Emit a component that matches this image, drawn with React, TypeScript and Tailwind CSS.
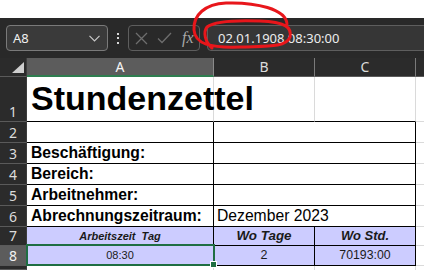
import React from "react";

const ui = "font-['Noto_Sans','Open_Sans',sans-serif]";
const arial = "font-['Liberation_Sans',Arial,sans-serif]";

function RowHead({ n, sel = false }: { n: string; sel?: boolean }) {
  return (
    <div
      className={`${ui} flex items-end justify-center border-b border-r border-b-[#5a5a5a] border-r-[#3c3c3c] text-[14px] leading-[19px] ${
        sel ? "bg-[#5c5c5c] text-[#f2f2f2]" : "bg-[#2b2b2b] text-[#dcdcdc]"
      }`}
    >
      {n}
    </div>
  );
}

export default function App() {
  return (
    <div className="relative w-[424px] h-[270px] overflow-hidden bg-white">
      <div className="h-[18px] bg-white" />
      {/* Formula bar */}
      <div className={`${ui} h-[40px] bg-[#292929] flex items-start pt-[7px] pl-[6px]`}>
        <div className="w-[102px] h-[26px] shrink-0 rounded-[4px] border border-[#7a7a7a] bg-[#3a3a3a] flex items-center justify-between pl-[6px] pr-[6px]">
          <span className="text-[13px] text-[#f0f0f0] leading-none">A8</span>
          <svg width="11" height="7" viewBox="0 0 11 7" className="mr-[1px]">
            <path d="M0.5 0.8 L5.5 5.8 L10.5 0.8" fill="none" stroke="#c8c8c8" strokeWidth="1.2" />
          </svg>
        </div>
        <div className="w-[20px] h-[26px] shrink-0 flex flex-col items-center justify-center gap-[2.5px]">
          <div className="w-[2px] h-[2px] bg-[#d8d8d8]" />
          <div className="w-[2px] h-[2px] bg-[#d8d8d8]" />
          <div className="w-[2px] h-[2px] bg-[#d8d8d8]" />
        </div>
        <div className="w-[72px] h-[26px] shrink-0 rounded-[4px] border border-[#5e5e5e] flex items-center pl-[6px] gap-[9px]">
          <svg width="13" height="13" viewBox="0 0 13 13">
            <path d="M1 1 L12 12 M12 1 L1 12" stroke="#6e6e6e" strokeWidth="1.3" />
          </svg>
          <svg width="15" height="12" viewBox="0 0 15 12">
            <path d="M1 6.5 L5 10.5 L14 1" fill="none" stroke="#6e6e6e" strokeWidth="1.3" />
          </svg>
          <span className="font-['Liberation_Serif',serif] italic text-[16px] text-[#a8a8a8] leading-none ml-[1px]">
            fx
          </span>
        </div>
        <div className="ml-[7px] w-[240px] h-[26px] shrink-0 rounded-l-[4px] border border-[#5e5e5e] bg-[#363636] flex items-center pl-[10px]">
          <span className="text-[13px] text-[#ededed] leading-none">02.01.1908 08:30:00</span>
        </div>
      </div>

      {/* Grid */}
      <div className="grid grid-cols-[27px_187px_101px_101px_1fr] grid-rows-[19px_45px_21px_21px_21px_21px_21px_19px_20px_1fr] h-[212px]">
        {/* header row */}
        <div className="relative bg-[#2b2b2b] border-r border-b border-r-[#3c3c3c] border-b-[#5a5a5a]">
          <svg width="27" height="19" viewBox="0 0 27 19" className="absolute left-0 top-0">
            <path d="M12 15 L24 15 L24 4 Z" fill="#cfcfcf" />
          </svg>
        </div>
        <div className={`${ui} bg-[#5c5c5c] border-r border-r-[#8a8a8a] border-b-2 border-b-[#2e7d4f] flex items-center justify-center text-[14px] text-[#f4f4f4] leading-none`}>
          A
        </div>
        <div className={`${ui} bg-[#2b2b2b] border-r border-r-[#7a7a7a] border-b border-b-[#5a5a5a] flex items-center justify-center text-[14px] text-[#dcdcdc] leading-none`}>
          B
        </div>
        <div className={`${ui} bg-[#2b2b2b] border-r border-r-[#7a7a7a] border-b border-b-[#5a5a5a] flex items-center justify-center text-[14px] text-[#dcdcdc] leading-none`}>
          C
        </div>
        <div className="bg-[#2b2b2b] border-b border-b-[#5a5a5a]" />

        {/* row 1 */}
        <RowHead n="1" />
        <div className={`${arial} border-r border-b border-r-[#dadada] border-b-black flex items-end pl-[4px] pb-[6px] text-[34px] font-bold leading-none text-black whitespace-nowrap overflow-visible z-10`}>
          Stundenzettel
        </div>
        <div className="border-r border-b border-r-[#dadada] border-b-black" />
        <div className="border-r border-b border-r-[#dadada] border-b-black" />
        <div className="border-b border-b-[#dadada]" />

        {/* row 2 */}
        <RowHead n="2" />
        <div className="border-r border-b border-black" />
        <div className="col-span-2 border-r border-b border-black" />
        <div className="border-b border-b-[#dadada]" />

        {/* rows 3-5 */}
        {["Beschäftigung:", "Bereich:", "Arbeitnehmer:"].map((t, i) => (
          <React.Fragment key={t}>
            <RowHead n={String(i + 3)} />
            <div className={`${arial} border-r border-b border-black pl-[4px] text-[15.7px] font-bold leading-[20px] text-black whitespace-nowrap`}>
              {t}
            </div>
            <div className="col-span-2 border-r border-b border-black" />
            <div className="border-b border-b-[#dadada]" />
          </React.Fragment>
        ))}

        {/* row 6 */}
        <RowHead n="6" />
        <div className={`${arial} border-r border-b border-black pl-[4px] text-[15.7px] font-bold leading-[20px] text-black whitespace-nowrap`}>
          Abrechnungszeitraum:
        </div>
        <div className={`${arial} col-span-2 border-r border-b border-black pl-[3px] text-[15.7px] leading-[20px] text-black whitespace-nowrap`}>
          Dezember 2023
        </div>
        <div className="border-b border-b-[#dadada]" />

        {/* row 7 */}
        <RowHead n="7" />
        <div className={`${arial} bg-[#ccccff] border-r border-b border-black text-center text-[11px] font-bold italic leading-[19px] text-[#1a1a1a] whitespace-pre`}>
          {"Arbeitszeit  Tag"}
        </div>
        <div className={`${arial} bg-[#ccccff] border-r border-b border-black text-center text-[13.4px] font-bold italic leading-[18px] text-[#1a1a1a]`}>
          Wo Tage
        </div>
        <div className={`${arial} bg-[#ccccff] border-r border-b border-black text-center text-[13px] font-bold italic leading-[18px] text-[#1a1a1a]`}>
          Wo Std.
        </div>
        <div className="border-b border-b-[#dadada]" />

        {/* row 8 */}
        <RowHead n="8" sel />
        <div className={`${arial} bg-[#ccccff] border-r border-b border-black text-center text-[11px] leading-[19px] text-[#1a1a1a]`}>
          08:30
        </div>
        <div className={`${arial} bg-[#ccccff] border-r border-b border-black text-center text-[12.5px] leading-[19px] text-[#1a1a1a]`}>
          2
        </div>
        <div className={`${arial} bg-[#ccccff] border-r border-b border-black text-center text-[12.3px] leading-[19px] text-[#1a1a1a]`}>
          70193:00
        </div>
        <div className="border-b border-b-[#dadada]" />

        {/* row 9 */}
        <RowHead n="" />
        <div className="border-r border-r-[#dadada]" />
        <div className="border-r border-r-[#dadada]" />
        <div className="border-r border-r-[#dadada]" />
        <div />
      </div>

      {/* selection */}
      <div className="absolute left-[26px] top-[244px] w-[189px] h-[22px] border-2 border-[#1f6e43] pointer-events-none" />
      <div className="absolute left-[211px] top-[262px] w-[5px] h-[5px] bg-[#1f6e43] outline outline-1 outline-white pointer-events-none" />

      {/* red annotation */}
      <svg width="424" height="270" viewBox="0 0 424 270" className="absolute left-0 top-0 pointer-events-none">
        <path
          d="M287 24 C286 9, 256 2, 226 3 C205 4, 193 15, 194 30 C195 44, 210 48, 240 47 C265 46, 286 48, 290 37 C292 27, 285 22, 260 21 C235 20, 215 21, 207 27 C203 32, 205 42, 212 48"
          fill="none"
          stroke="#e8161b"
          strokeWidth="3"
          strokeLinecap="round"
        />
      </svg>
    </div>
  );
}
